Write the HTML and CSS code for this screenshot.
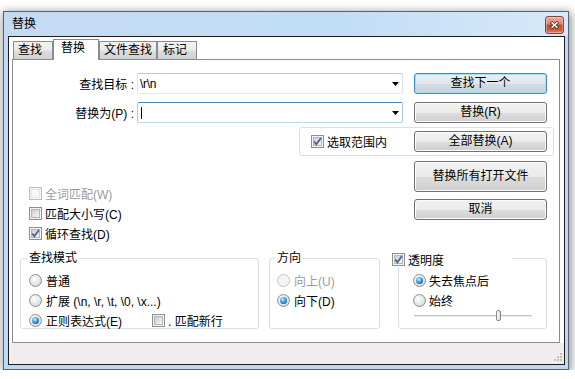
FILE: index.html
```html
<!DOCTYPE html>
<html lang="zh-CN">
  <head>
    <meta charset="UTF-8" />
    <title>替换</title>
    <link rel="stylesheet" href="styles.css">
  </head>
  <body>
    <div class="window">
      <div class="titlebar">
        <span class="title">替换</span>
        <span class="close-btn">
          <svg width="9" height="8" viewBox="0 0 9 8">
            <path d="M1 1 L8 7 M8 1 L1 7" stroke="#3a2b2b" stroke-width="3" fill="none" />
            <path d="M1.5 1.4 L7.5 6.6 M7.5 1.4 L1.5 6.6" stroke="#fff" stroke-width="1.4" fill="none" />
          </svg>
        </span>
      </div>

      <div class="frame">
        <div class="client">
          <div class="tab-area">
            <div class="tabstrip">
              <div class="tab tab-find">查找</div>
              <div class="tab active">替换</div>
              <div class="tab tab-files">文件查找</div>
              <div class="tab tab-mark">标记</div>
            </div>

            <div class="panel">
              <div class="field-row">
                <label class="field-label">查找目标 :</label>
                <div class="combo">
                  <span class="combo-text">\r\n</span>
                  <svg class="arrow" width="7" height="4" viewBox="0 0 7 4"><polygon points="0,0 7,0 3.5,4" fill="#000" /></svg>
                </div>
                <button class="btn default">查找下一个</button>
              </div>

              <div class="field-row">
                <label class="field-label">替换为(P) :</label>
                <div class="combo focused">
                  <span class="caret"></span>
                  <svg class="arrow" width="7" height="4" viewBox="0 0 7 4"><polygon points="0,0 7,0 3.5,4" fill="#000" /></svg>
                </div>
                <button class="btn">替换(R)</button>
              </div>

              <div class="scope-box">
                <label class="check">
                  <span class="chk on"><svg viewBox="0 0 11 11"><path d="M2.2 5.4 L4.4 8.3 L8.9 2.1" stroke="#4a5e92" stroke-width="1.7" fill="none" /></svg></span>选取范围内
                </label>
                <button class="btn">全部替换(A)</button>
              </div>

              <div class="mid-row">
                <div class="options">
                  <label class="check disabled"><span class="chk"></span>全词匹配(W)</label>
                  <label class="check"><span class="chk"></span>匹配大小写(C)</label>
                  <label class="check">
                    <span class="chk on"><svg viewBox="0 0 11 11"><path d="M2.2 5.4 L4.4 8.3 L8.9 2.1" stroke="#4a5e92" stroke-width="1.7" fill="none" /></svg></span>循环查找(D)
                  </label>
                </div>
                <div class="btn-col">
                  <button class="btn tall">替换所有打开文件</button>
                  <button class="btn">取消</button>
                </div>
              </div>

              <div class="groups">
                <div class="group mode">
                  <div class="group-title">查找模式</div>
                  <div class="group-body">
                    <label class="radio-item"><span class="radio"></span>普通</label>
                    <label class="radio-item"><span class="radio"></span>扩展 (\n, \r, \t, \0, \x...)</label>
                    <div class="radio-line">
                      <label class="radio-item regex"><span class="radio on"></span>正则表达式(E)</label>
                      <label class="check"><span class="chk"></span>. 匹配新行</label>
                    </div>
                  </div>
                </div>

                <div class="group dir">
                  <div class="group-title">方向</div>
                  <div class="group-body">
                    <label class="radio-item disabled"><span class="radio"></span>向上(U)</label>
                    <label class="radio-item"><span class="radio on"></span>向下(D)</label>
                  </div>
                </div>

                <div class="group alpha">
                  <label class="alpha-title">
                    <span class="chk on"><svg viewBox="0 0 11 11"><path d="M2.2 5.4 L4.4 8.3 L8.9 2.1" stroke="#4a5e92" stroke-width="1.7" fill="none" /></svg></span>透明度
                  </label>
                  <div class="alpha-body">
                    <label class="radio-item"><span class="radio on"></span>失去焦点后</label>
                    <label class="radio-item"><span class="radio"></span>始终</label>
                    <div class="slider"><span class="thumb"></span></div>
                  </div>
                </div>
              </div>
            </div>
          </div>

          <div class="statusbar">
            <svg class="grip" width="11" height="11" viewBox="0 0 11 11">
              <rect x="9" y="1" width="2" height="2" fill="#c2c2c2" />
              <rect x="6" y="4" width="2" height="2" fill="#c2c2c2" />
              <rect x="9" y="4" width="2" height="2" fill="#c2c2c2" />
              <rect x="3" y="7" width="2" height="2" fill="#c2c2c2" />
              <rect x="6" y="7" width="2" height="2" fill="#c2c2c2" />
              <rect x="9" y="7" width="2" height="2" fill="#c2c2c2" />
            </svg>
          </div>
        </div>
      </div>
    </div>
  </body>
</html>
```

FILE: styles.css
```css
body {
  margin: 0;
  background: #fff;
  font-family: "Liberation Sans", "Noto Sans CJK SC", sans-serif;
  font-size: 12px;
  color: #000;
}

/* window chrome */
.window {
  margin: 11px 0 0 3px;
  width: 566px;
  height: 359px;
  box-sizing: border-box;
  border: 1px solid #5a6470;
  background: #bed9f3;
  box-shadow: 1px 2px 9px 1px rgba(0, 0, 0, 0.45);
  display: flex;
  flex-direction: column;
}
.titlebar {
  height: 24px;
  box-sizing: border-box;
  padding: 4px 4px 0 8px;
  display: flex;
  justify-content: space-between;
  align-items: flex-start;
  background: linear-gradient(to right, #c3dbf2, #c1ddf6 60%, #d8e9fa);
}
.title {
  line-height: 16px;
}
.close-btn {
  width: 19px;
  height: 18px;
  box-sizing: border-box;
  border: 1px solid #84463b;
  border-radius: 3px;
  background: linear-gradient(#eaab9d, #d98872 42%, #c44a2f 52%, #cf573a 80%, #e0866c);
  box-shadow: inset 0 0 0 1px rgba(255, 255, 255, 0.3);
  display: flex;
  align-items: center;
  justify-content: center;
}
.frame {
  flex: 1;
  display: flex;
  padding: 0 3px 4px 4px;
}
.client {
  flex: 1;
  border: 1px solid #1c1c1c;
  background: #fff;
  display: flex;
  flex-direction: column;
}

/* tabs */
.tab-area {
  flex: 1;
  padding: 2px 4px 0 3px;
  display: flex;
  flex-direction: column;
}
.tabstrip {
  height: 20px;
  padding-left: 1px;
  display: flex;
  align-items: flex-end;
  position: relative;
  z-index: 1;
}
.tab {
  height: 18px;
  box-sizing: border-box;
  border: 1px solid #898c95;
  border-bottom: none;
  background: linear-gradient(#f3f3f3, #ebebeb 45%, #dddddd 55%, #d0d0d0);
  line-height: 17px;
  padding-left: 4px;
  white-space: nowrap;
}
.tab-find { width: 40px; }
.tab-files { width: 58px; }
.tab-mark { width: 40px; padding-left: 5px; }
.tab.active {
  width: 46px;
  height: 21px;
  margin-bottom: -1px;
  padding: 0 0 0 7px;
  line-height: 17px;
  background: #fff;
}
.panel {
  flex: 1;
  border: 1px solid #898c95;
  background: #fff;
  padding-top: 13px;
}

/* find / replace rows */
.field-row {
  display: flex;
  align-items: center;
  height: 21px;
}
.field-row + .field-row {
  margin-top: 8px;
}
.field-label {
  width: 121px;
  text-align: right;
  white-space: nowrap;
}
.combo {
  width: 266px;
  height: 21px;
  margin-left: 3px;
  box-sizing: border-box;
  border: 1px solid;
  border-color: #c4c7cc #dfe2e7 #e4e8ec #dfe2e7;
  border-radius: 2px;
  display: flex;
  align-items: center;
  justify-content: space-between;
  padding: 0 3px 0 2px;
}
.combo.focused {
  border-color: #4b83b7 #a9c9e4 #bcd9ee #a9c9e4;
}
.combo-text {
  letter-spacing: -0.3px;
}
.caret {
  width: 1px;
  height: 12px;
  margin-left: 1px;
  background: #000;
}
.btn {
  width: 133px;
  height: 21px;
  margin-left: 11px;
  box-sizing: border-box;
  border: 1px solid #707070;
  border-radius: 3px;
  background: linear-gradient(#f2f2f2, #ebebeb 50%, #dddddd 51%, #cfcfcf);
  box-shadow: inset 0 0 0 1px #fbfbfb;
  font: inherit;
  color: #000;
  padding: 0;
  line-height: 17px;
}
.btn.default {
  border-color: #3a8cc4;
  background: linear-gradient(#e9f0f4, #e0e8ed 50%, #d3dce2 51%, #c9d3d9);
  box-shadow: inset 0 0 0 1px #9fe1f8;
}

/* "in selection" box */
.scope-box {
  margin: 4px 0 0 286px;
  width: 255px;
  height: 29px;
  box-sizing: border-box;
  border: 1px solid #d5dfe5;
  border-radius: 3px;
  padding: 0 6px 0 11px;
  display: flex;
  align-items: center;
  justify-content: space-between;
}
.scope-box .btn {
  margin-left: 0;
}

/* checkbox options + right buttons */
.mid-row {
  display: flex;
  justify-content: space-between;
  padding: 0 12px 0 16px;
}
.options {
  padding-top: 27px;
}
.check {
  display: flex;
  align-items: center;
  gap: 3px;
  height: 20px;
  white-space: nowrap;
}
.check.disabled {
  color: #9b9b9b;
}
.btn-col {
  padding-top: 5px;
  display: flex;
  flex-direction: column;
  gap: 7px;
}
.btn-col .btn {
  margin-left: 0;
}
.btn.tall {
  height: 31px;
}

/* checkbox and radio glyphs */
.chk {
  width: 13px;
  height: 13px;
  flex: none;
  box-sizing: border-box;
  border: 1px solid #8f8f8f;
  background: #f4f4f4;
  display: grid;
  place-items: center;
}
.chk::before {
  content: "";
  grid-area: 1 / 1;
  width: 9px;
  height: 9px;
  box-sizing: border-box;
  border: 1px solid #b3b7bc;
  background: linear-gradient(135deg, #c9cdd2, #f6f6f6);
}
.chk svg {
  grid-area: 1 / 1;
  width: 11px;
  height: 11px;
}
.check.disabled .chk {
  border-color: #bcbcbc;
}
.check.disabled .chk::before {
  border-color: #e6e6e6;
  background: #f7f7f7;
}
.radio {
  width: 13px;
  height: 13px;
  flex: none;
  box-sizing: border-box;
  border: 1px solid #8e8f8f;
  border-radius: 50%;
  background: radial-gradient(circle at 40% 35%, #fdfdfd, #e2e2e2 60%, #cfcfcf);
  display: grid;
  place-items: center;
}
.radio.on::before {
  content: "";
  width: 7px;
  height: 7px;
  border-radius: 50%;
  background: radial-gradient(circle at 40% 35%, #c8eeff 0, #50b6ee 35%, #1a6eb3 70%, #0b4682);
}
.radio-item {
  display: flex;
  align-items: center;
  gap: 4px;
  height: 20px;
  white-space: nowrap;
}
.radio-item.disabled {
  color: #9b9b9b;
}
.radio-item.disabled .radio {
  border-color: #c4c4c4;
  background: #f3f3f3;
}

/* group boxes */
.groups {
  display: flex;
  margin-top: 15px;
  padding-left: 7px;
}
.group {
  height: 71px;
  box-sizing: border-box;
  border: 1px solid #d5dfe5;
  border-radius: 3px;
}
.group.mode {
  width: 239px;
  padding-left: 8px;
}
.group.dir {
  width: 111px;
  margin-left: 10px;
  padding-left: 7px;
}
.group.alpha {
  width: 149px;
  margin-left: 18px;
  padding-left: 14px;
}
.group-title {
  width: fit-content;
  height: 14px;
  line-height: 14px;
  margin: -8px 0 0 -2px;
  padding: 0 2px;
  background: #fff;
}
.group-body {
  padding-top: 5px;
}
.radio-line {
  display: flex;
  align-items: center;
}
.radio-item.regex {
  width: 123px;
}
.alpha-title {
  width: 120px;
  height: 16px;
  margin: -8px 0 0 -21px;
  background: #fff;
  display: flex;
  align-items: center;
  gap: 3px;
}
.alpha-body {
  padding-top: 3px;
}
.alpha-body .radio-item {
  gap: 3px;
}
.slider {
  width: 118px;
  height: 11px;
  margin-left: 1px;
  display: flex;
  background:
    linear-gradient(#c3c3c3, #c3c3c3) 0 5px / 100% 1px no-repeat,
    linear-gradient(#ececec, #ececec) 0 6px / 100% 1px no-repeat;
}
.thumb {
  width: 5px;
  height: 11px;
  margin-left: 82px;
  box-sizing: border-box;
  border: 1px solid #888;
  border-radius: 2px;
  background: linear-gradient(to right, #fdfdfd, #dcdcdc);
}

/* status bar with size grip */
.statusbar {
  height: 21px;
  background: #f0edec;
  display: flex;
  justify-content: flex-end;
  align-items: flex-end;
}
.grip {
  margin: 0 2px 1px 0;
}
```
